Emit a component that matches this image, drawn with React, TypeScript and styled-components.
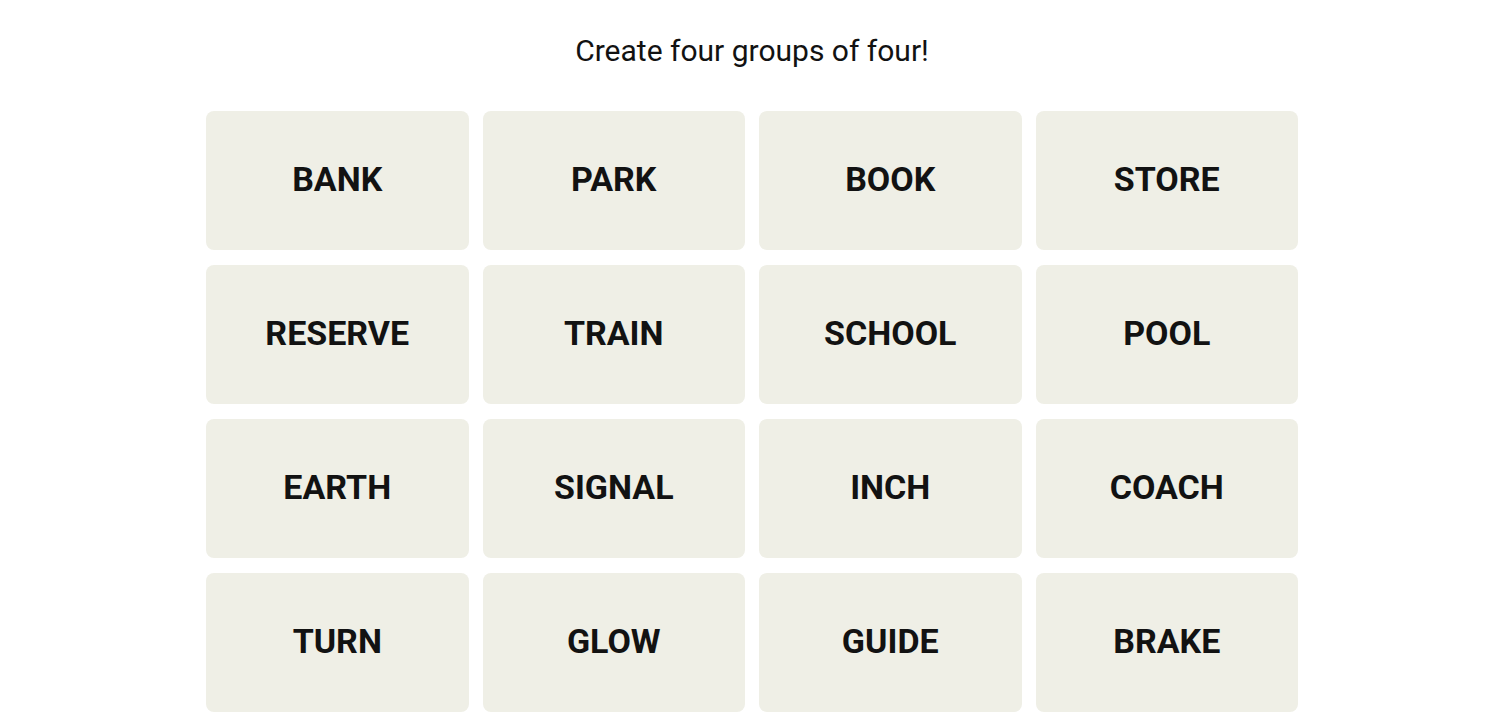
import React, { FC } from 'react';
import styled, { createGlobalStyle } from 'styled-components';

const words = [
	'BANK', 'PARK', 'BOOK', 'STORE',
	'RESERVE', 'TRAIN', 'SCHOOL', 'POOL',
	'EARTH', 'SIGNAL', 'INCH', 'COACH',
	'TURN', 'GLOW', 'GUIDE', 'BRAKE',
];

const App: FC = () => {
	return (
		<>
			<GlobalStyle />
			<Page>
				<Title>Create four groups of four!</Title>
				<Board>
					{words.map((w) => (
						<Tile key={w}>{w}</Tile>
					))}
				</Board>
			</Page>
		</>
	);
};

const GlobalStyle = createGlobalStyle`
	html, body {
		margin: 0;
		padding: 0;
		background: #ffffff;
	}
	* {
		box-sizing: border-box;
	}
`;

const Page = styled.div`
	display: flex;
	flex-direction: column;
	align-items: center;
	padding: 34px 0 0 4px;
	font-family: Roboto, 'Liberation Sans', sans-serif;
	color: #121212;
`;

const Title = styled.h1`
	margin: 0;
	font-size: 30px;
	font-weight: 400;
	line-height: 34px;
`;

const Board = styled.div`
	display: grid;
	grid-template-columns: repeat(4, 262.5px);
	grid-auto-rows: 139px;
	column-gap: 14px;
	row-gap: 15px;
	margin-top: 43px;
`;

const Tile = styled.button`
	display: flex;
	align-items: center;
	justify-content: center;
	border: none;
	border-radius: 8px;
	background: #efefe6;
	color: #121212;
	font-family: Roboto, 'Liberation Sans', sans-serif;
	font-size: 34px;
	font-weight: 700;
	padding: 0 0 4px;
	cursor: pointer;
`;

export default App;
